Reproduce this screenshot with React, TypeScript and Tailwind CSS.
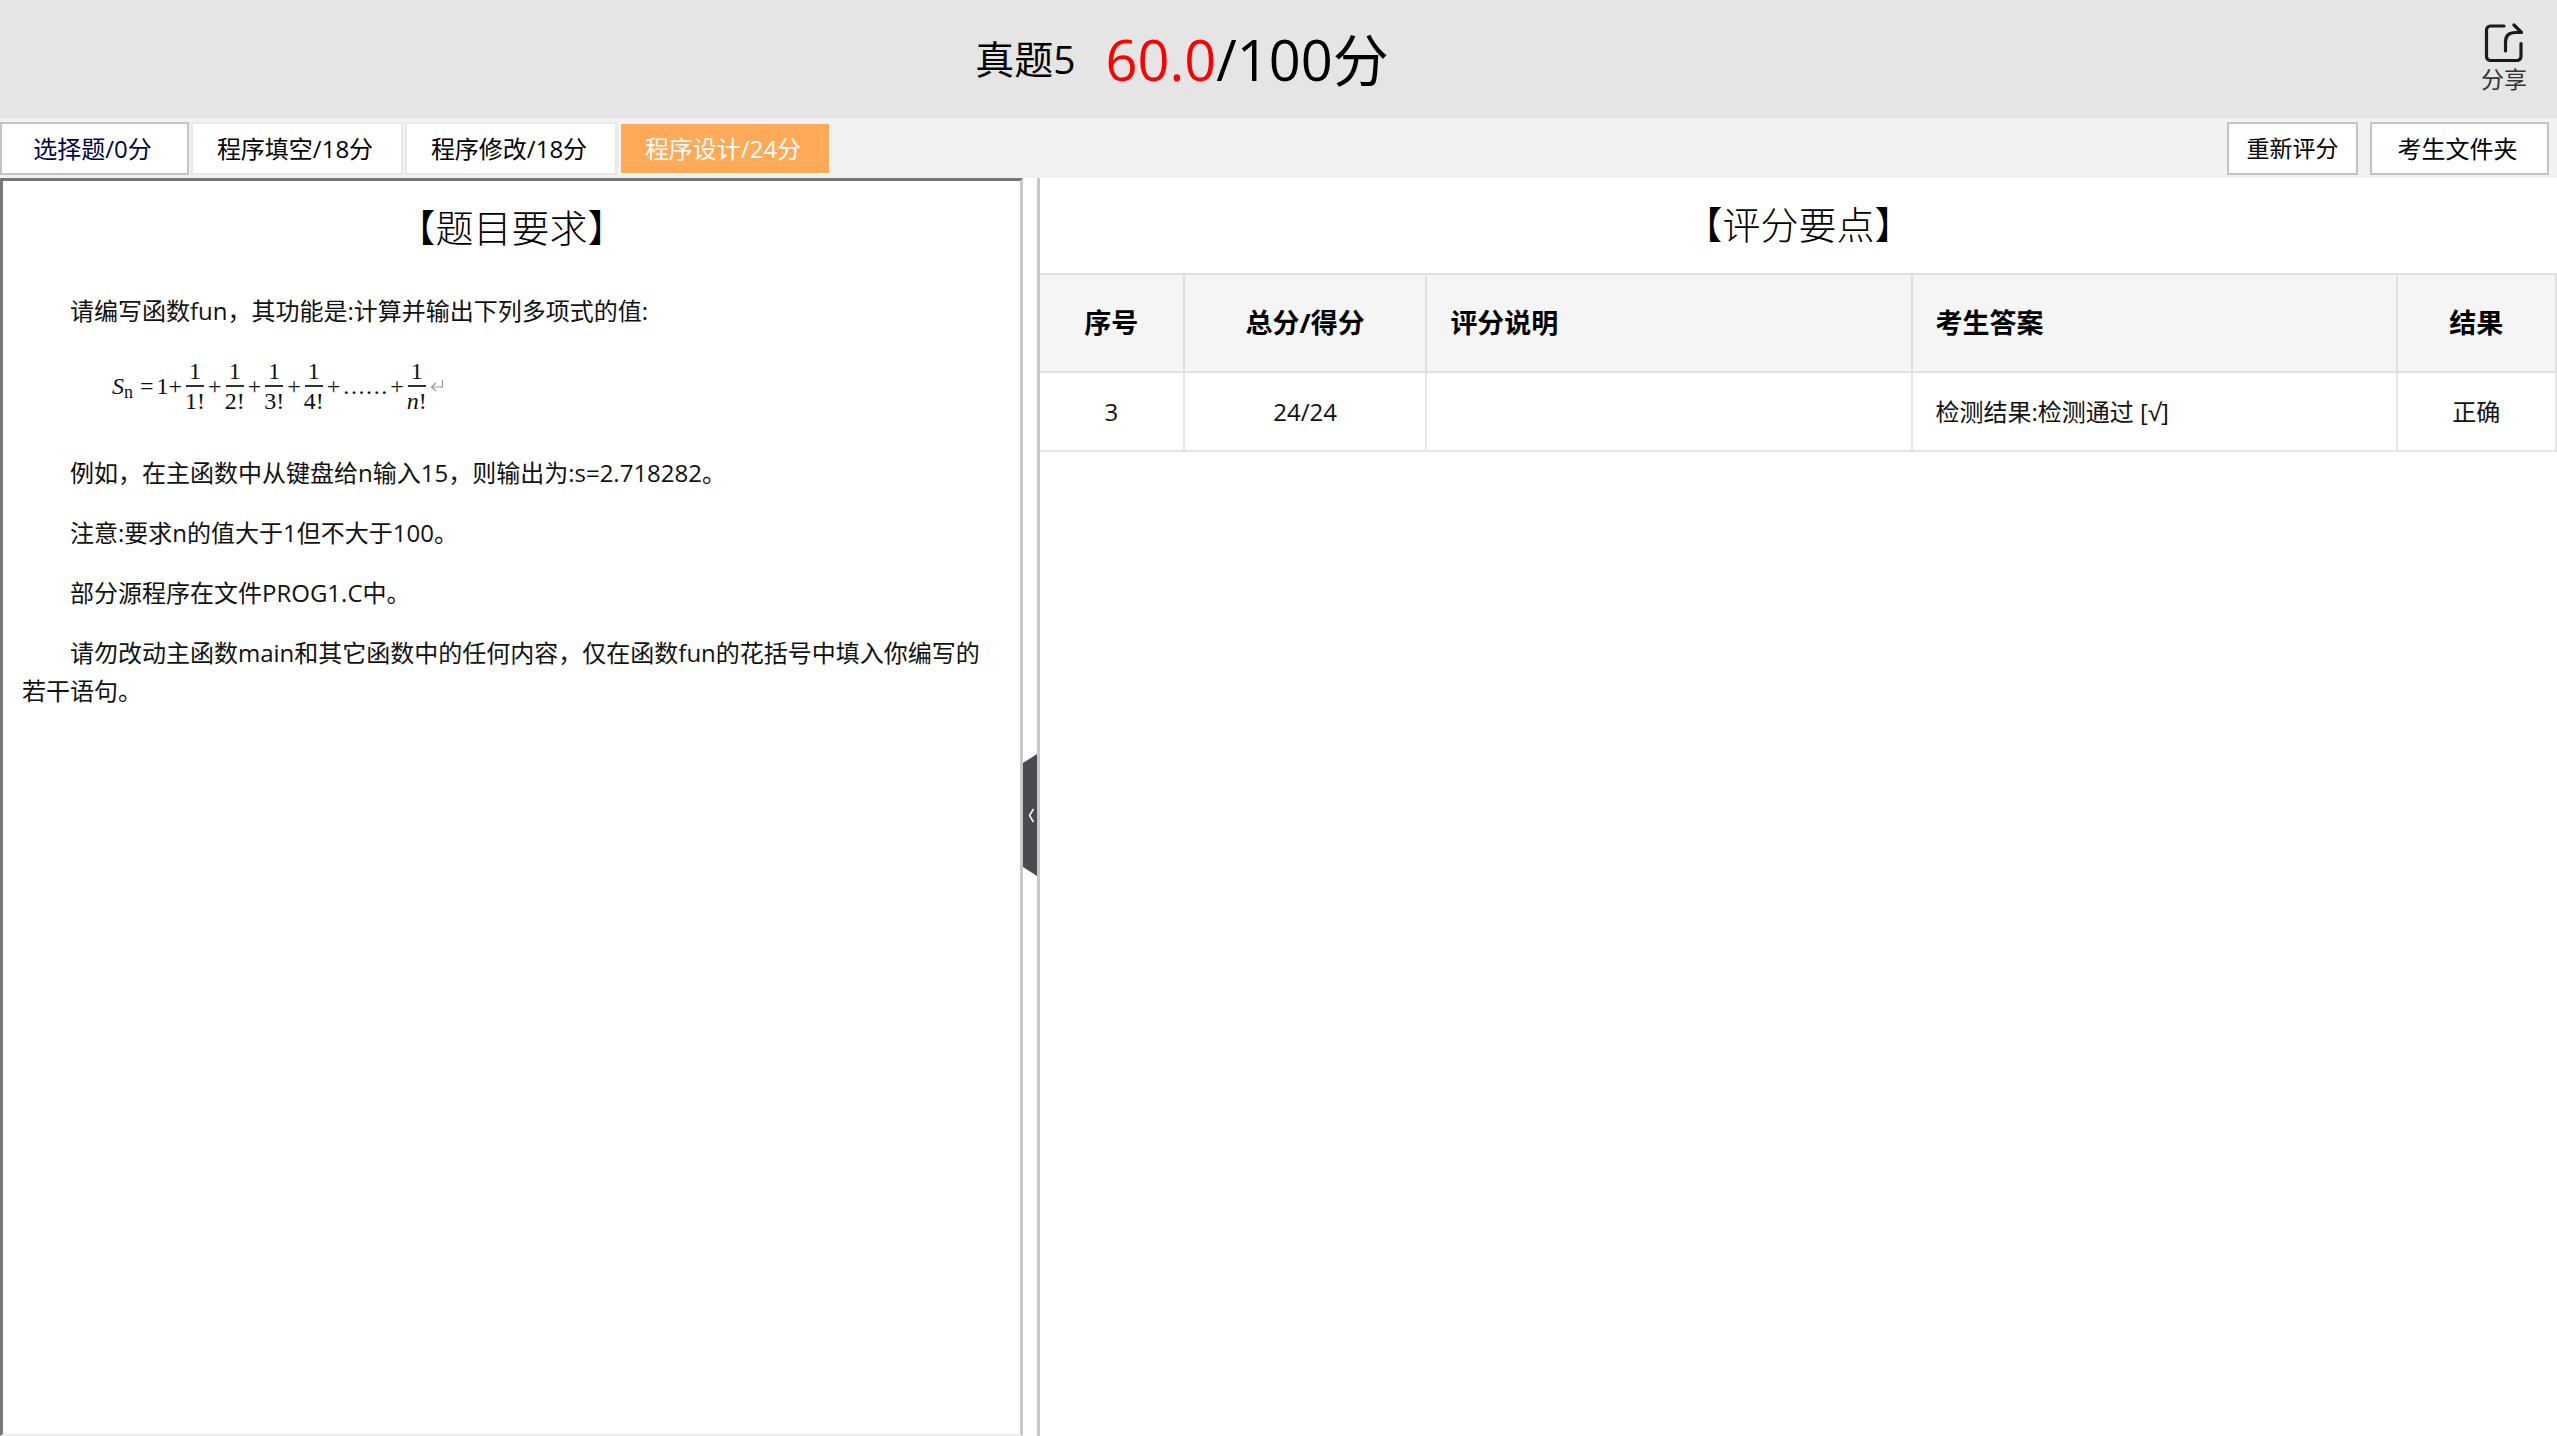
import { Fragment } from "react"

const tabs = [
  { label: "选择题/0分", className: "w-[189px] border-[#c4c4c4] bg-white text-[#000046]" },
  { label: "程序填空/18分", className: "w-[212px] border-[#e8e8e8] bg-white text-black" },
  { label: "程序修改/18分", className: "w-[212px] border-[#e8e8e8] bg-white text-black" },
  { label: "程序设计/24分", className: "w-[212px] border-[#f8f4ee] bg-[#ffaa58] text-white" },
]

const rows = [
  { id: "3", score: "24/24", note: "", answer: "检测结果:检测通过 [√]", result: "正确" },
]

const notes = [
  "例如，在主函数中从键盘给n输入15，则输出为:s=2.718282。",
  "注意:要求n的值大于1但不大于100。",
  "部分源程序在文件PROG1.C中。",
  "请勿改动主函数main和其它函数中的任何内容，仅在函数fun的花括号中填入你编写的若干语句。",
]

function Fraction({ bottom, italic = false }: { bottom: string; italic?: boolean }) {
  return (
    <span className="flex flex-col items-center">
      <span className="leading-7">1</span>
      <span className="h-[2px] w-[18px] bg-[#333]" />
      <span className="flex leading-7">
        <span className={italic ? "italic" : ""}>{bottom}</span>!
      </span>
    </span>
  )
}

function Formula() {
  return (
    <div className="flex h-20 items-center gap-[3px] pb-3 pl-[90px] font-['Liberation_Serif',serif] text-2xl text-[#111]">
      <span className="flex items-end">
        <span className="italic leading-7">S</span>
        <span className="text-lg leading-4">n</span>
      </span>
      <span className="ml-1">=</span>
      <span className="flex">
        <span>1</span>
        <span>+</span>
      </span>
      {["1", "2", "3", "4"].map((n) => (
        <Fragment key={n}>
          <Fraction bottom={n} />
          <span>+</span>
        </Fragment>
      ))}
      <span className="flex w-11 justify-between">
        {[1, 2, 3, 4, 5, 6].map((n) => (
          <span key={n}>.</span>
        ))}
      </span>
      <span>+</span>
      <Fraction bottom="n" italic />
      <svg className="h-4 w-[14px]" viewBox="0 0 14 16" fill="none" stroke="#999" strokeWidth="1.200" aria-hidden="true">
        <path d="M12.500 2v7H1.500M6 5L1.500 9 6 13" />
      </svg>
    </div>
  )
}

function ShareIcon() {
  return (
    <svg className="h-10 w-10" viewBox="0 0 40 40" fill="none" stroke="#1a1a1a" strokeWidth="3.200" strokeLinecap="round" strokeLinejoin="round" aria-hidden="true">
      <path d="M20 3H6.500a4 4 0 0 0-4 4V33.500a4 4 0 0 0 4 4H33a4 4 0 0 0 4-4V20.500" />
      <path d="M21.500 28V19q0-9.500 10-9.500H37.500L30 2" />
    </svg>
  )
}

export default function App() {
  return (
    <div className="flex min-h-screen flex-col bg-white font-['Open_Sans','Noto_Sans_CJK_SC',sans-serif] text-2xl text-black">
      <header className="flex h-[118px] items-center bg-[#e5e5e5]">
        <div className="flex flex-1 items-center justify-center gap-[30px]">
          <h1 className="text-[39px]">真题5</h1>
          <p className="text-[56px]">
            <span className="text-[#ff0000]">60.0</span>/100分
          </p>
        </div>
        <div className="flex w-[193px] justify-end pr-[30px]">
          <button type="button" className="flex flex-col items-center text-[23px] leading-8 text-[#333]">
            <ShareIcon />
            分享
          </button>
        </div>
      </header>

      <nav className="flex h-[60px] items-start justify-between bg-[#f1f1f1] pr-2 pt-1">
        <div className="flex gap-[2px]">
          {tabs.map((tab) => (
            <button key={tab.label} type="button" className={`h-[53px] border-2 pr-1 ${tab.className}`}>
              {tab.label}
            </button>
          ))}
        </div>
        <div className="flex gap-3">
          <button type="button" className="h-[53px] w-[131px] border-2 border-[#c4c4c4] bg-white text-[23px]">
            重新评分
          </button>
          <button type="button" className="h-[53px] w-[179px] border-2 border-[#c4c4c4] bg-white pr-1">
            考生文件夹
          </button>
        </div>
      </nav>

      <main className="flex flex-1">
        <section className="w-[40%] border-b-2 border-l-[3px] border-r-[3px] border-t-[3px] border-b-[#eee] border-l-[#777] border-r-[#c8c8c8] border-t-[#777] px-[19px]">
          <h2 className="pt-4 text-center text-[38px] font-light leading-[60px]">【题目要求】</h2>
          <div className="flex flex-col gap-[22px] pt-[35px] leading-[38px] text-[#111]">
            <p className="indent-12">请编写函数fun，其功能是:计算并输出下列多项式的值:</p>
            <Formula />
            {notes.map((note) => (
              <p key={note} className="indent-12">
                {note}
              </p>
            ))}
          </div>
        </section>

        <div className="flex w-[14px] items-center pt-4">
          <button type="button" aria-label="收起" className="h-[122px] w-[14px]">
            <svg className="h-full w-full" viewBox="0 0 14 122" fill="none" aria-hidden="true">
              <path d="M0 9L14 0V122L0 113Z" fill="#4a4b50" />
              <path d="M10.500 55l-4 6.500 4 6.500" stroke="#fff" strokeWidth="1.500" />
            </svg>
          </button>
        </div>

        <section className="flex-1 border-l-[3px] border-[#c8c8c8]">
          <h2 className="pb-[19px] pt-4 text-center text-[38px] font-light leading-[60px]">【评分要点】</h2>
          <table className="w-full table-fixed border-collapse">
            <thead>
              <tr className="h-[98px] border-y-2 border-[#e0e0e0] bg-[#f5f5f5] text-[27px]">
                <th className="w-[144px] border-r-2 border-[#e0e0e0]">序号</th>
                <th className="w-[16%] border-r-2 border-[#e0e0e0]">总分/得分</th>
                <th className="w-[32%] border-r-2 border-[#e0e0e0] px-[23px] text-left">评分说明</th>
                <th className="w-[32%] border-r-2 border-[#e0e0e0] px-[23px] text-left">考生答案</th>
                <th className="border-r-2 border-[#e0e0e0]">结果</th>
              </tr>
            </thead>
            <tbody>
              {rows.map((row) => (
                <tr key={row.id} className="h-[79px] border-b-2 border-[#e6e6e6] text-[#111]">
                  <td className="border-r-2 border-[#e6e6e6] text-center">{row.id}</td>
                  <td className="border-r-2 border-[#e6e6e6] text-center">{row.score}</td>
                  <td className="border-r-2 border-[#e6e6e6] px-[23px]">{row.note}</td>
                  <td className="border-r-2 border-[#e6e6e6] px-[23px]">{row.answer}</td>
                  <td className="border-r-2 border-[#e6e6e6] text-center">{row.result}</td>
                </tr>
              ))}
            </tbody>
          </table>
        </section>
      </main>
    </div>
  )
}
